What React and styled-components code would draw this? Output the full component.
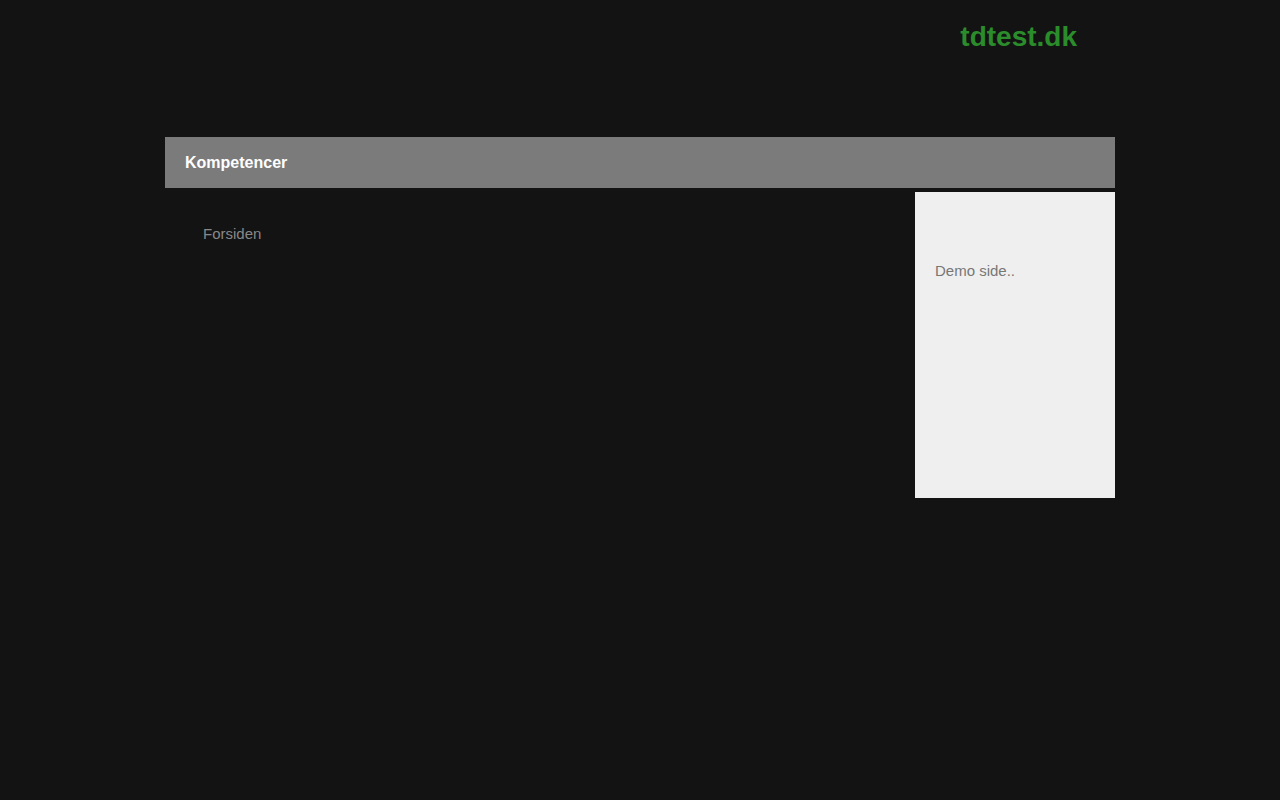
import React from "react";
import styled, { createGlobalStyle } from "styled-components";

const GlobalStyle = createGlobalStyle`
  html, body {
    margin: 0;
    padding: 0;
    background: #131313;
    font-family: "Liberation Sans", Arial, sans-serif;
  }
`;

const App = () => {
  return (
    <>
      <GlobalStyle />
      <Page>
        <Header>
          <Logo>tdtest.dk</Logo>
        </Header>
        <NavBar>Kompetencer</NavBar>
        <Content>
          <Main>
            <Crumb>Forsiden</Crumb>
          </Main>
          <Aside>Demo side..</Aside>
        </Content>
      </Page>
    </>
  );
};

export default App;

const Page = styled.div`
  width: 950px;
  margin: 0 auto;
`;

const Header = styled.header`
  height: 137px;
  display: flex;
  justify-content: flex-end;
  align-items: flex-start;
  padding-right: 38px;
  box-sizing: border-box;
`;

const Logo = styled.div`
  margin-top: 21px;
  color: #2b8c2b;
  font-size: 28px;
  font-weight: bold;
  line-height: 32px;
`;

const NavBar = styled.nav`
  height: 51px;
  line-height: 51px;
  padding-left: 20px;
  background: #7b7b7b;
  color: #ffffff;
  font-size: 16px;
  font-weight: bold;
`;

const Content = styled.div`
  display: flex;
  margin-top: 4px;
`;

const Main = styled.main`
  flex: 1;
  padding: 33px 38px;
`;

const Crumb = styled.div`
  color: #888888;
  font-size: 15px;
  line-height: 17px;
`;

const Aside = styled.aside`
  width: 200px;
  height: 306px;
  box-sizing: border-box;
  padding: 70px 20px 0;
  background: #efefef;
  color: #777777;
  font-size: 15px;
  line-height: 17px;
`;
